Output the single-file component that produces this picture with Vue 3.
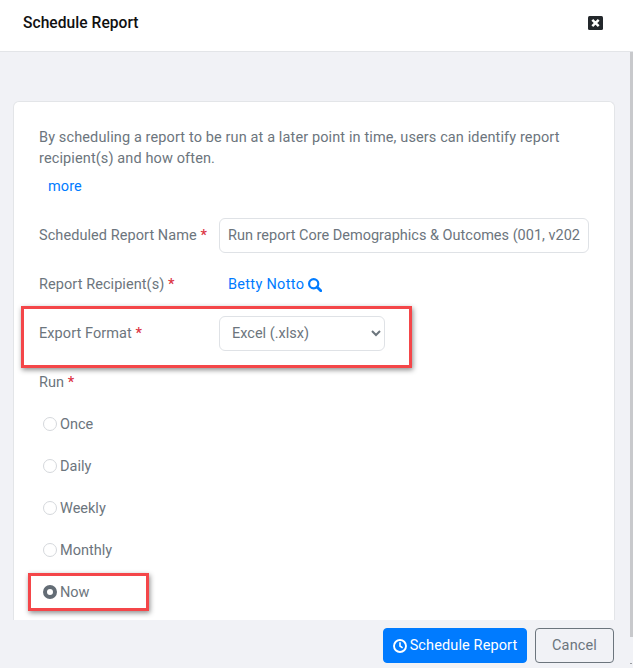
<script setup>
const runOptions = [
  { label: 'Once', checked: false },
  { label: 'Daily', checked: false },
  { label: 'Weekly', checked: false },
  { label: 'Monthly', checked: false },
  { label: 'Now', checked: true },
]
</script>

<template>
  <div class="modal">
    <header class="head">
      <h1 class="title">Schedule Report</h1>
      <svg class="close" width="15" height="14" viewBox="0 0 15 14" aria-label="Close">
        <rect width="15" height="14" rx="1.5" fill="#23272b" />
        <path d="M4.3 3.8l6.4 6.4M10.7 3.8L4.3 10.2" stroke="#fff" stroke-width="2.5" />
      </svg>
    </header>

    <main class="body">
      <section class="card">
        <p class="intro">By scheduling a report to be run at a later point in time, users can identify report recipient(s) and how often.</p>
        <a class="more">more</a>

        <div class="row">
          <label class="label">Scheduled Report Name <b>*</b></label>
          <input class="control name" value="Run report Core Demographics &amp; Outcomes (001, v2023)" />
        </div>
        <div class="row">
          <label class="label">Report Recipient(s) <b>*</b></label>
          <a class="person">Betty Notto
            <svg width="14" height="14" viewBox="0 0 14 14">
              <circle cx="5.7" cy="5.7" r="4.6" fill="none" stroke="#007bff" stroke-width="2.2" />
              <path d="M9 9l3.8 3.8" stroke="#007bff" stroke-width="2.8" stroke-linecap="round" />
            </svg>
          </a>
        </div>
        <div class="row">
          <label class="label">Export Format <b>*</b></label>
          <select class="control format">
            <option>Excel (.xlsx)</option>
          </select>
        </div>
        <div class="row">
          <label class="label">Run <b>*</b></label>
        </div>
        <div class="radios">
          <label v-for="o in runOptions" :key="o.label" class="radio">
            <input type="radio" name="run" :checked="o.checked" />
            <span>{{ o.label }}</span>
          </label>
        </div>
      </section>
    </main>

    <footer class="foot">
      <button class="btn primary">
        <svg width="14" height="14" viewBox="0 0 14 14">
          <circle cx="7" cy="7" r="6" fill="none" stroke="#fff" stroke-width="1.9" />
          <path d="M7 3.2V7l2.6 1.8" fill="none" stroke="#fff" stroke-width="1.6" />
        </svg>
        Schedule Report
      </button>
      <button class="btn ghost">Cancel</button>
    </footer>

    <div class="scrollbar"></div>
    <div class="resizer"></div>
    <div class="mark mark-format"></div>
    <div class="mark mark-now"></div>
  </div>
</template>

<style>
html, body { margin: 0; background: #fff; }
</style>

<style scoped>
.modal {
  position: relative;
  width: 633px;
  height: 668px;
  display: flex;
  flex-direction: column;
  overflow: hidden;
  background: #f1f2f6;
  font-family: Roboto, "Open Sans", sans-serif;
  font-size: 14.5px;
  letter-spacing: 0.12px;
  color: #6c757d;
}
.head {
  flex: none;
  box-sizing: border-box;
  display: flex;
  align-items: center;
  justify-content: space-between;
  padding: 0 30px 6px 23px;
  background: #fff;
  border-bottom: 1px solid #e3e5e8;
  height: 52px;
}
.title {
  margin: 0;
  font-size: 15.6px;
  font-weight: 500;
  letter-spacing: 0.03px;
  color: #111;
}
.body {
  flex: 1;
  min-height: 0;
  overflow: hidden;
  padding: 49px 18px 0 13px;
}
.card {
  box-sizing: border-box;
  height: 520px;
  padding: 25px 25px 0;
  background: #fff;
  border: 1px solid #e3e5e8;
  border-bottom: 0;
  border-radius: 6px 6px 0 0;
}
.intro {
  margin: 0;
  line-height: 21px;
  width: 530px;
}
.more {
  display: block;
  margin: 7px 0 21px 9px;
  line-height: 21px;
  color: #007bff;
}
.row {
  display: flex;
  align-items: center;
  height: 35px;
  margin-bottom: 14px;
}
.label { width: 180px; flex: none; letter-spacing: 0.07px; }
.label b { color: #dc3545; font-weight: 500; }
.control {
  box-sizing: border-box;
  height: 35px;
  font: inherit;
  color: #6c757d;
  background: #fff;
  border: 1px solid #dfe2e6;
  border-radius: 6px;
  outline: none;
}
.name { width: 370px; padding: 0 8px; letter-spacing: 0; }
.format { width: 166px; padding: 0 8px; letter-spacing: 0; }
.person {
  display: flex;
  align-items: center;
  gap: 4px;
  margin-left: 9px;
  color: #007bff;
  letter-spacing: 0.3px;
}
.radios { display: flex; flex-direction: column; gap: 21px; margin-top: 14px; }
.radio {
  display: flex;
  align-items: center;
  gap: 3px;
  height: 21px;
  padding-left: 4px;
  letter-spacing: 0;
}
.radio input {
  appearance: none;
  box-sizing: border-box;
  width: 14px;
  height: 14px;
  margin: -1px 0 0;
  border: 1px solid #d5d8dc;
  border-radius: 50%;
  background: #fff;
}
.radio input:checked { border: 4px solid #636c75; }
.foot {
  flex: none;
  height: 48px;
  box-sizing: border-box;
  display: flex;
  justify-content: flex-end;
  align-items: flex-start;
  gap: 8px;
  padding: 8px 19px 0 0;
}
.btn {
  height: 35px;
  box-sizing: border-box;
  font: inherit;
  letter-spacing: inherit;
  border-radius: 4px;
  display: flex;
  align-items: center;
  justify-content: center;
  gap: 3px;
}
.primary { width: 144px; background: #007bff; border: 1px solid #007bff; color: #fff; }
.ghost { width: 79px; background: transparent; border: 1px solid #6c757d; color: #6c757d; }
.scrollbar {
  position: absolute;
  right: 0;
  top: 52px;
  width: 3px;
  height: 585px;
  background: #c8c9cc;
}
.resizer {
  position: absolute;
  right: 1px;
  bottom: 4px;
  width: 2px;
  height: 1px;
  background: #9a9da1;
}
.mark {
  position: absolute;
  box-sizing: border-box;
  border: 3px solid #f44649;
  box-shadow: 1px 2px 5px rgba(0, 0, 0, .45);
}
.mark-format { left: 21px; top: 306px; width: 391px; height: 62px; }
.mark-now { left: 28px; top: 573px; width: 121px; height: 38px; }
</style>
